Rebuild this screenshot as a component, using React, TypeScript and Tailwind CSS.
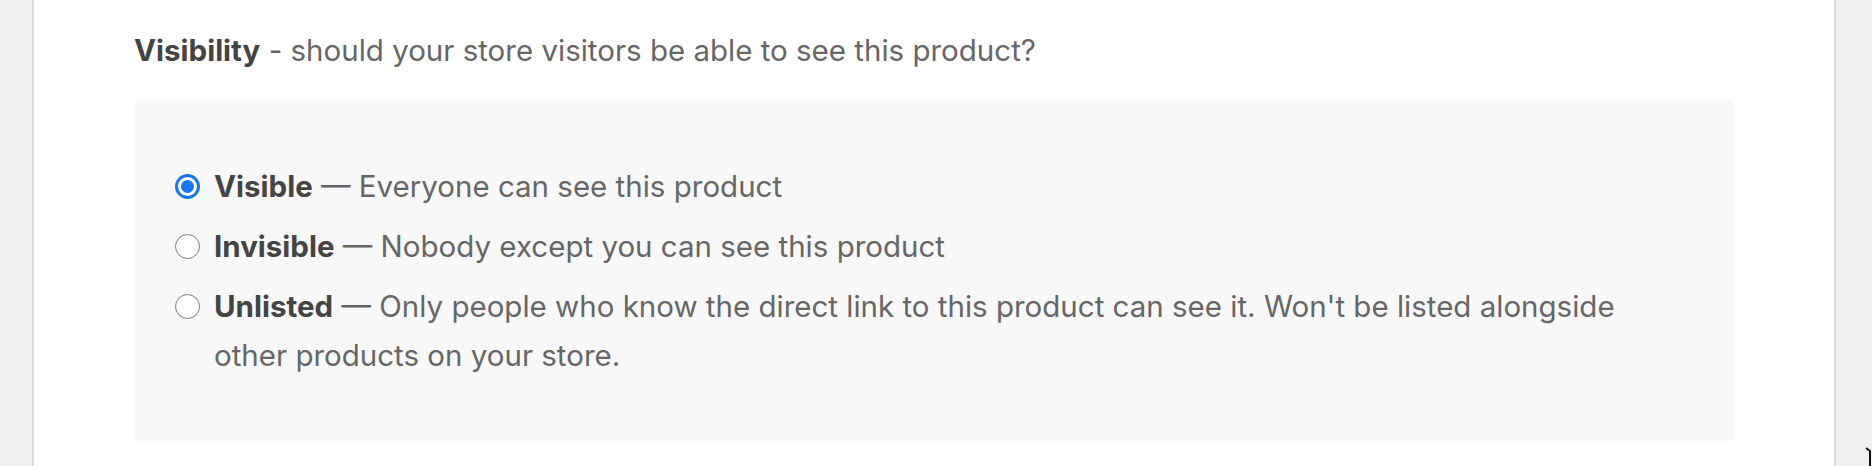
import React from "react";

const options = [
  {
    id: "visible",
    label: "Visible",
    desc: "Everyone can see this product",
    checked: true,
  },
  {
    id: "invisible",
    label: "Invisible",
    desc: "Nobody except you can see this product",
    checked: false,
  },
  {
    id: "unlisted",
    label: "Unlisted",
    desc: "Only people who know the direct link to this product can see it. Won't be listed alongside other products on your store.",
    checked: false,
  },
];

const Radio = ({ checked }: { checked: boolean }) =>
  checked ? (
    <span className="flex h-[25px] w-[25px] shrink-0 items-center justify-center rounded-full border-[3px] border-[#1677f2] bg-white">
      <span className="h-[13px] w-[13px] rounded-full bg-[#1677f2]" />
    </span>
  ) : (
    <span className="h-[25px] w-[25px] shrink-0 rounded-full border-[1.5px] border-[#7a7a7a] bg-white" />
  );

export default function App() {
  return (
    <div
      className="relative flex h-[466px] w-full overflow-hidden bg-[#f0f0f0]"
      style={{ fontFamily: "Inter, Lato, sans-serif" }}
    >
      <div className="ml-[32px] h-full w-[1804px] border-x-2 border-[#dcdcdc] bg-white px-[100px] pt-[26px]">
        <p className="text-[29.5px] leading-[49px] text-[#666]">
          <span className="font-bold text-[#444]">Visibility</span> - should
          your store visitors be able to see this product?
        </p>
        <div className="mt-[26px] flex h-[340px] flex-col gap-[11px] bg-[#f8f8f8] py-[61px] pl-[41px] pr-[94px]">
          {options.map((o) => (
            <label key={o.id} className="flex items-start gap-[14px]">
              <span className="flex h-[49px] items-center">
                <Radio checked={o.checked} />
              </span>
              <span className="text-[29.5px] leading-[49px] text-[#666]">
                <span className="font-bold text-[#444]">{o.label}</span> —{" "}
                {o.desc}
              </span>
            </label>
          ))}
        </div>
      </div>
      <svg
        className="absolute bottom-0 right-0"
        width="8"
        height="20"
        viewBox="0 0 8 20"
      >
        <path d="M2 2 L6 5 L6 20" stroke="#111" strokeWidth="2" fill="none" />
      </svg>
    </div>
  );
}
